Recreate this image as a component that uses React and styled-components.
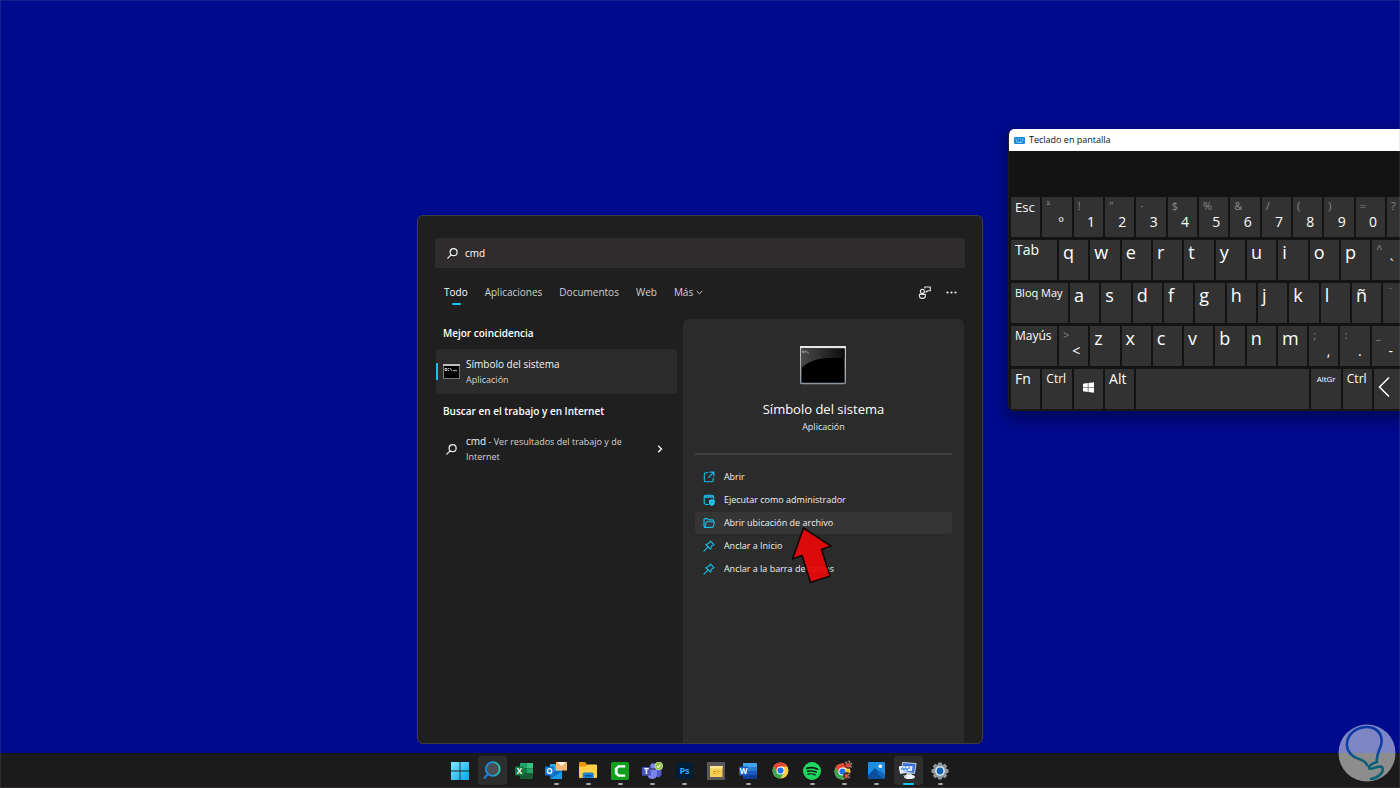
import React, { useState } from 'react';
import styled, { createGlobalStyle, css } from 'styled-components';

const GlobalStyle = createGlobalStyle`
  *, *::before, *::after { box-sizing: border-box; }
  body {
    margin: 0;
    background: #000a8c;
    font-family: "Open Sans", "Noto Sans", sans-serif;
    color: #fff;
  }
  button, input { font: inherit; color: inherit; border: 0; background: none; padding: 0; }
  h2, h3, p, ul { margin: 0; padding: 0; font-weight: 400; }
  ul { list-style: none; }
  svg { display: block; flex: none; }
`;

const Screen = styled.div`
  position: relative;
  display: flex;
  flex-direction: column;
  min-height: 100vh;
  overflow: hidden;
  &::after {
    content: '';
    position: absolute;
    inset: 0;
    border: 1px solid rgba(120, 150, 150, 0.16);
    pointer-events: none;
  }
`;

const Desktop = styled.main`
  position: relative;
  flex: 1;
  display: flex;
  flex-direction: column;
  align-items: center;
  justify-content: flex-end;
  padding: 16px 16px 9px;
`;

/* ---------- search flyout ---------- */

const Flyout = styled.section`
  position: relative;
  display: flex;
  flex-direction: column;
  width: 566px;
  max-width: 100%;
  min-height: 529px;
  padding: 22px 17px 0;
  border: 1px solid #3c3c44;
  border-radius: 6px;
  background: #1f1f1f;
`;

const SearchBox = styled.label`
  display: flex;
  align-items: center;
  gap: 7px;
  height: 30px;
  padding: 0 12px;
  border-radius: 3px;
  background: #2e2c2d;
`;

const SearchInput = styled.input`
  flex: 1;
  min-width: 0;
  outline: none;
  font-size: 10px;
  line-height: 16px;
`;

const Toolbar = styled.div`
  display: flex;
  align-items: center;
  justify-content: space-between;
  height: 51px;
  padding: 0 8px 3px 9px;
`;

const Tabs = styled.div`
  display: flex;
  gap: 17px;
`;

const Tab = styled.button`
  position: relative;
  display: flex;
  align-items: center;
  gap: 3px;
  font-size: 10px;
  line-height: 16px;
  color: ${(p) => (p.$active ? '#fff' : '#d0d0d0')};
  ${(p) =>
    p.$active &&
    css`
      &::after {
        content: '';
        position: absolute;
        left: calc(50% - 4px);
        bottom: -5px;
        width: 9px;
        height: 2px;
        border-radius: 1px;
        background: #12c4f5;
      }
    `}
`;

const Tools = styled.div`
  display: flex;
  align-items: center;
  gap: 15px;
`;

const IconButton = styled.button`
  display: flex;
`;

const Columns = styled.div`
  flex: 1;
  display: grid;
  grid-template-columns: 6fr 7fr;
  gap: 6px;
  margin: 0 1px;
`;

const Results = styled.div`
  display: flex;
  flex-direction: column;
`;

const SectionTitle = styled.h2`
  padding: ${(p) => (p.$first ? '6px 7px 8px' : '9px 7px')};
  font-size: 10px;
  line-height: 16px;
  font-weight: 600;
`;

const Result = styled.button`
  position: relative;
  display: flex;
  align-items: center;
  gap: 6px;
  min-height: ${(p) => (p.$selected ? '45px' : '42px')};
  padding: 0 14px 0 7px;
  border-radius: 3px;
  text-align: left;
  ${(p) =>
    p.$selected &&
    css`
      background: #2b2b2b;
      &::before {
        content: '';
        position: absolute;
        left: 0;
        top: 14px;
        width: 2px;
        height: 17px;
        background: #12c4f5;
      }
    `}
`;

const ResultText = styled.span`
  flex: 1;
  display: flex;
  flex-direction: column;
`;

const ResultLine = styled.span`
  flex: 1;
  font-size: 9px;
  line-height: 15px;
`;

const ResultName = styled.span`
  font-size: 10px;
  line-height: 15px;
  color: #f4f4f4;
`;

const ResultNote = styled.span`
  font-size: 9px;
  line-height: 15px;
  color: #d4d4d4;
`;

const IconSlot = styled.span`
  display: flex;
  justify-content: center;
  width: 17px;
`;

const Preview = styled.article`
  display: flex;
  flex-direction: column;
  align-items: center;
  padding: 27px 12px 0;
  border-radius: 6px 6px 0 0;
  background: #2b2b2b;
`;

const PreviewTitle = styled.h3`
  margin-top: 14px;
  font-size: 13px;
  line-height: 20px;
`;

const PreviewKind = styled.p`
  font-size: 9px;
  line-height: 16px;
  color: #e0e0e0;
`;

const Actions = styled.ul`
  align-self: stretch;
  display: flex;
  flex-direction: column;
  gap: 1px;
  margin-top: 18px;
  padding-top: 11px;
  border-top: 2px solid #404040;
`;

const Action = styled.button`
  display: flex;
  align-items: center;
  gap: 9px;
  width: 100%;
  height: 22px;
  padding: 0 8px;
  border-radius: 3px;
  background: ${(p) => (p.$hovered ? '#353535' : 'transparent')};
  font-size: 9px;
  line-height: 14px;
  color: #f0f0f0;
  text-align: left;
`;

const Pointer = styled.svg`
  position: absolute;
  left: 372px;
  top: 309px;
  pointer-events: none;
`;

/* ---------- on-screen keyboard ---------- */

const KeyboardWindow = styled.section`
  position: absolute;
  left: 72%;
  top: 129px;
  width: 568px;
  border: 1px solid #1c1c1c;
  border-top: 0;
  border-radius: 6px;
  background: #101010;
  box-shadow: 0 6px 14px 2px rgba(0, 0, 20, 0.4);
  overflow: hidden;
`;

const TitleBar = styled.header`
  display: flex;
  align-items: center;
  gap: 4px;
  height: 22px;
  padding: 0 5px;
  background: #fff;
  color: #101010;
  font-size: 9px;
  line-height: 14px;
`;

const Keys = styled.div`
  display: grid;
  gap: 3px;
  padding: 46px 2px 1px;
  background: #131313;
`;

const KeyRow = styled.div`
  display: grid;
  grid-template-columns: ${(p) => p.$columns};
  gap: 2px;
`;

const Key = styled.button`
  display: flex;
  flex-direction: column;
  align-items: ${(p) => (p.$center ? 'center' : 'flex-start')};
  justify-content: ${(p) => (p.$icon ? 'center' : 'flex-start')};
  min-width: 0;
  height: 40px;
  padding: ${(p) => (p.$icon ? '0 4px 4px' : '0 4px')};
  background: #323232;
  font-size: ${(p) => p.$size || 18}px;
  line-height: ${(p) => (p.$letter ? 24 : 20)}px;
  white-space: nowrap;
`;

const KeyAlt = styled.span`
  font-size: 11px;
  line-height: 17px;
  color: #8a8a8a;
`;

const KeyMain = styled.span`
  align-self: flex-end;
  padding-right: 4px;
  font-size: 14px;
  line-height: 16px;
`;

/* ---------- taskbar ---------- */

const Taskbar = styled.footer`
  display: flex;
  justify-content: center;
  gap: 3px;
  height: 35px;
  padding-top: 3px;
  background: #1b1b1b;
`;

const TaskButton = styled.button`
  position: relative;
  display: flex;
  align-items: center;
  justify-content: center;
  width: 29px;
  height: 29px;
  border-radius: 3px;
  background: ${(p) => (p.$lit ? '#2d2d2d' : 'transparent')};
  ${(p) =>
    p.$mark &&
    css`
      &::after {
        content: '';
        position: absolute;
        bottom: 0;
        left: calc(50% - ${p.$mark === 'active' ? 5 : 2}px);
        width: ${p.$mark === 'active' ? 11 : 5}px;
        height: 2px;
        border-radius: 1px;
        background: ${p.$mark === 'active' ? '#12c4f5' : '#a6a6a6'};
      }
    `}
`;

const Watermark = styled.svg`
  position: absolute;
  right: 4px;
  bottom: 6px;
  pointer-events: none;
`;

/* ---------- icons ---------- */

const Magnifier = ({ size = 11 }) => (
  <svg width={size} height={size} viewBox="0 0 11 11" fill="none" stroke="#f0f0f0" strokeWidth="1.2" strokeLinecap="round">
    <circle cx="6.6" cy="4.2" r="3.5" />
    <path d="M4.1 6.8 0.8 10.2" />
  </svg>
);

const ChevronDown = () => (
  <svg width="7" height="5" viewBox="0 0 7 5" fill="none" stroke="#cfcfcf" strokeWidth="1">
    <path d="M0.7 1 3.5 3.8 6.3 1" />
  </svg>
);

const ChevronRight = () => (
  <svg width="6" height="8" viewBox="0 0 6 8" fill="none" stroke="#f4f4f4" strokeWidth="1.4">
    <path d="M1.2 0.8 4.5 4 1.2 7.2" />
  </svg>
);

const FeedbackIcon = () => (
  <svg width="13" height="13" viewBox="0 0 13 13" fill="none" stroke="#e4e4e4" strokeWidth="1.1">
    <circle cx="4.4" cy="5.4" r="2" />
    <path d="M1.4 8.4h6v1.300a3 2.700 0 0 1-6 0z" strokeLinejoin="round" />
    <path d="M6.800 2.600V1h5.500v3.800H9.700L8.200 6.200V4.800" strokeLinejoin="round" />
  </svg>
);

const MoreIcon = () => (
  <svg width="11" height="3" viewBox="0 0 11 3" fill="#f0f0f0">
    <circle cx="1.5" cy="1.5" r="1.1" />
    <circle cx="5.5" cy="1.5" r="1.1" />
    <circle cx="9.5" cy="1.5" r="1.1" />
  </svg>
);

const ConsoleSmall = () => (
  <svg width="17" height="15" viewBox="0 0 17 15">
    <rect x=".5" y=".5" width="16" height="14" fill="#000" stroke="#777" />
    <path d="M0 1h17" stroke="#bdbdbd" strokeWidth="2" />
    <path d="M2 4.5h2v2H2zM5.5 4v1M5.5 6v1M7 4l2 3M10 6.7h4" fill="none" stroke="#ddd" strokeWidth=".9" />
  </svg>
);

const ConsoleLarge = () => (
  <svg width="46" height="39" viewBox="0 0 46 39">
    <defs>
      <linearGradient id="gloss" x1="0" x2="1">
        <stop offset="0" stopColor="#4a4a4a" />
        <stop offset="1" stopColor="#0c0c0c" />
      </linearGradient>
      <linearGradient id="frame" x1="0" y1="0" x2="0" y2="1">
        <stop offset="0" stopColor="#c8c8c8" />
        <stop offset="1" stopColor="#8d97a0" />
      </linearGradient>
    </defs>
    <rect x=".7" y="1" width="44.600" height="36.500" rx="1" fill="#000" stroke="url(#frame)" strokeWidth="1.400" />
    <path d="M1.400 3H44.600V12.500C24 10 9 14 1.400 22Z" fill="url(#gloss)" />
    <path d="M0 1.200h46" stroke="#e6e6e6" strokeWidth="2.200" />
    <path d="M2.500 5h1.600v1.500H2.500zM5.500 5v1.500M6.500 5l1 2M7.500 7h1.500" fill="none" stroke="#bbb" strokeWidth=".6" />
  </svg>
);

const accent = { fill: 'none', stroke: '#18bce8', strokeWidth: 1.1, strokeLinejoin: 'round', strokeLinecap: 'round' };

const OpenIcon = () => (
  <svg width="12" height="12" viewBox="0 0 12 12" {...accent}>
    <path d="M5 1.8H2.6A1.3 1.3 0 0 0 1.3 3.1v6.3a1.3 1.3 0 0 0 1.3 1.3h6.3a1.3 1.3 0 0 0 1.3-1.3V7" />
    <path d="M7 1.1h3.9V5M10.8 1.2 5.6 6.4" />
  </svg>
);

const AdminIcon = () => (
  <svg width="12" height="12" viewBox="0 0 12 12" {...accent}>
    <path d="M5.5 10.5H3A1.8 1.8 0 0 1 1.2 8.7V3A1.8 1.8 0 0 1 3 1.2h5.8A1.8 1.8 0 0 1 10.6 3v2.200M1.200 3.200h9.400" />
    <path d="M1.6 2.200h8.600" strokeWidth="1.200" />
    <path d="M8.8 5.300 11.700 6.300v2.400c0 1.500-1.200 2.500-2.900 3.200-1.700-.7-2.800-1.700-2.800-3.200V6.300z" fill="#18d4ff" stroke="none" />
    <path d="M8.8 7v3M7.700 8.400h2.200" stroke="#1688a8" strokeWidth=".6" />
  </svg>
);

const FolderIcon = () => (
  <svg width="12" height="12" viewBox="0 0 12 12" {...accent}>
    <path d="M1.8 10.4 1 9.6V2.3l.8-.7h2.6l1.3 1.3h4l.8.8v1.1" />
    <path d="M1.8 10.4 3 5.6l.8-.8h7.1l.4.6-.9 4.3-.8.7z" />
  </svg>
);

const PinIcon = () => (
  <svg width="12" height="12" viewBox="0 0 12 12" {...accent}>
    <path d="M7.3 1 11 4.7 8.6 6.1 7.5 9.2 2.8 4.5 5.9 3.4z" />
    <path d="M4.9 7.1.9 11.1" />
  </svg>
);

const KeyboardIcon = () => (
  <svg width="11" height="7" viewBox="0 0 11 7">
    <rect width="11" height="7" rx="1" fill="#1789d8" />
    <path d="M1.5 2h1M4 2h1M6.3 2h1M8.600 2h1M2 3.600h1M8 3.600h1M2.600 5.200h5.600" stroke="#bfe4ff" strokeWidth=".9" />
  </svg>
);

const WindowsGlyph = () => (
  <svg width="11" height="11" viewBox="0 0 11 11" fill="#fff">
    <path d="M0 1.800 4.800 1.100V5.200H0zM5.400 1 11 .2v5H5.400zM0 5.800h4.800v4.100L0 9.200zM5.400 5.800H11v5L5.400 10z" />
  </svg>
);

const ArrowLeftGlyph = () => (
  <svg width="12" height="22" viewBox="0 0 12 22" fill="none" stroke="#fff" strokeWidth="1.500">
    <path d="M11 1.500 1.500 11 11 20.500" />
  </svg>
);

const glyph = { fill: '#fff', fontFamily: '"Open Sans", sans-serif', fontWeight: 700, textAnchor: 'middle' };

const StartIcon = () => (
  <svg width="18" height="18" viewBox="0 0 18 18">
    <defs>
      <linearGradient id="win" x1="0" y1="0" x2="1" y2="1">
        <stop offset="0" stopColor="#7ae8ff" />
        <stop offset="1" stopColor="#0aa2ec" />
      </linearGradient>
    </defs>
    <path d="M0 0h8.6v8.6H0zM9.4 0H18v8.6H9.4zM0 9.4h8.6V18H0zM9.4 9.4H18V18H9.4z" fill="url(#win)" />
  </svg>
);

const SearchIcon = () => (
  <svg width="18" height="19" viewBox="0 0 18 19" fill="none">
    <defs>
      <linearGradient id="lens" x1="0" x2="1">
        <stop offset="0.3" stopColor="#1a88dc" />
        <stop offset="1" stopColor="#22c8a4" />
      </linearGradient>
    </defs>
    <path d="M5.4 12.4 1.6 16.8" stroke="#1a7cd0" strokeWidth="2.2" strokeLinecap="round" />
    <circle cx="9.8" cy="8" r="6.9" fill="#4a4e52" stroke="url(#lens)" strokeWidth="1.9" />
  </svg>
);

const ExcelIcon = () => (
  <svg width="18" height="18" viewBox="0 0 18 18">
    <path d="M5 1h6.5v5.3H5z" fill="#21a366" />
    <path d="M11.500 1H18v5.300h-6.500z" fill="#33c481" />
    <path d="M5 6.300h6.500v5.300H5z" fill="#107c41" />
    <path d="M11.500 6.300H18v5.300h-6.500z" fill="#21a366" />
    <path d="M5 11.600h13V17H5z" fill="#185c37" />
    <rect y="4.600" width="9" height="9" rx="1" fill="#107c41" />
    <text x="4.500" y="12" fontSize="8" {...glyph}>X</text>
  </svg>
);

const OutlookIcon = () => (
  <svg width="22" height="18" viewBox="0 0 22 18">
    <rect x="5" y="2" width="12" height="14" fill="#28a8ea" />
    <path d="M5 9h12v7.500H5z" fill="#0a6cc4" />
    <path d="M5 17 17 9.500V17z" fill="#1c9be6" />
    <rect y="4.600" width="9" height="9" rx="1" fill="#0f78d4" />
    <text x="4.500" y="12" fontSize="8" {...glyph}>O</text>
    <rect x="11" y="0" width="11" height="8.500" fill="#f7b877" />
    <path d="M11 0 16.500 5 22 0z" fill="#fff0df" />
    <path d="M11 0 16.500 5 22 0" fill="none" stroke="#e08a3c" strokeWidth=".8" />
  </svg>
);

const ExplorerIcon = () => (
  <svg width="18" height="17" viewBox="0 0 18 17">
    <path d="M0 1a1 1 0 0 1 1-1h5l2 2.500V6H0z" fill="#e8970c" />
    <path d="M0 4.500h6.500l2-2H17a1 1 0 0 1 1 1V15a1 1 0 0 1-1 1H1a1 1 0 0 1-1-1z" fill="#ffcf4a" />
    <path d="M3.700 16v-4a1.500 1.500 0 0 1 1.500-1.500h8A1.500 1.500 0 0 1 14.700 12v4z" fill="#1f7fd4" />
    <path d="M5.800 13h7v1.500h-7z" fill="#0d57a0" />
  </svg>
);

const CamtasiaIcon = () => (
  <svg width="18" height="18" viewBox="0 0 18 18">
    <rect width="18" height="18" rx="1.500" fill="#12a01c" />
    <path d="M14.200 5.400V3.200H7.200L3.800 6.200v5.600l3.400 3h7v-2.400H8.300L6.500 10.800V7.100L8.300 5.400z" fill="#fff" />
  </svg>
);

const TeamsIcon = () => (
  <svg width="21" height="18" viewBox="0 0 21 18">
    <circle cx="11" cy="4" r="2.800" fill="#7b83eb" />
    <path d="M13 7.500h6.500v4.500a3.500 3.500 0 0 1-5 3z" fill="#5059c9" />
    <path d="M5.500 7.500H15V13a4.800 4.800 0 0 1-9.500 0z" fill="#7b83eb" />
    <rect y="5" width="8.800" height="8.800" rx="1" fill="#4b53bc" />
    <text x="4.400" y="12.200" fontSize="8" {...glyph}>T</text>
    <circle cx="16.800" cy="4" r="3.900" fill="#8ac43f" stroke="#e8f5dc" strokeWidth=".6" />
    <path d="M14.900 4.100 16.300 5.500 18.800 2.700" fill="none" stroke="#fff" strokeWidth="1.100" />
  </svg>
);

const PhotoshopIcon = () => (
  <svg width="17" height="17" viewBox="0 0 17 17">
    <rect width="17" height="17" rx="3" fill="#001e36" />
    <text x="8.500" y="12" fontSize="9" {...glyph} fill="#31a8ff">Ps</text>
  </svg>
);

const NotesIcon = () => (
  <svg width="18" height="18" viewBox="0 0 18 18">
    <rect width="18" height="18" fill="#595959" />
    <rect x="3" y="4" width="12.500" height="11" fill="#f6cf55" />
    <path d="M3 4h12.500v2.500H3z" fill="#ffe694" />
    <path d="M6 9.500h3.500M10.500 8.500 12 9.500 10 11.500M6.500 11.500h2" stroke="#cc8a20" strokeWidth=".9" fill="none" />
  </svg>
);

const WordIcon = () => (
  <svg width="18" height="18" viewBox="0 0 18 18">
    <path d="M4 1h14v4H4z" fill="#41a5ee" />
    <path d="M4 5h14v4H4z" fill="#2b7cd3" />
    <path d="M4 9h14v4H4z" fill="#185abd" />
    <path d="M4 13h14v4H4z" fill="#103f91" />
    <rect y="4.600" width="9" height="9" rx="1" fill="#185abd" />
    <text x="4.500" y="12" fontSize="8" {...glyph}>W</text>
  </svg>
);

const ChromeShape = () => (
  <g>
    <circle cx="8.500" cy="8.500" r="8" fill="#ffcd40" />
    <path d="M1.600 4.500A8 8 0 0 1 15.400 4.500H8.500L5 10.500z" fill="#e94335" />
    <path d="M1.600 4.500A8 8 0 0 0 8.500 16.500L12 10.500H5z" fill="#34a853" />
    <circle cx="8.500" cy="8.500" r="4" fill="#fff" />
    <circle cx="8.500" cy="8.500" r="3.100" fill="#1a73e8" />
  </g>
);

const ChromeIcon = () => (
  <svg width="17" height="17" viewBox="0 0 17 17">
    <ChromeShape />
  </svg>
);

const ChromeProfileIcon = () => (
  <svg width="21" height="21" viewBox="0 0 21 21">
    <g transform="translate(0 3)">
      <ChromeShape />
    </g>
    <circle cx="14.500" cy="4.500" r="4.200" fill="#3b2f2e" />
    <circle cx="13.800" cy="5.300" r="2.300" fill="#e8452c" />
    <path d="M11 2l1.500 1M15 .8l.5 2M18 3.500l-2 1M17.500 7l-2-.8" stroke="#cfc8c0" strokeWidth=".9" />
    <path d="M10.500 9.500 17 11 12.500 13z" fill="#f0c02c" />
    <circle cx="13" cy="16" r="3.800" fill="#3d2b28" />
    <circle cx="12.500" cy="16" r="1.900" fill="#d8563c" />
    <path d="M10.500 18.500l1-1M15.500 14l-1.500.8M15.800 17.500l-1.600-.7" stroke="#cfc8c0" strokeWidth=".8" />
  </svg>
);

const SpotifyIcon = () => (
  <svg width="18" height="18" viewBox="0 0 18 18">
    <circle cx="9" cy="9" r="9" fill="#1ed760" />
    <g fill="none" stroke="#121212" strokeLinecap="round">
      <path d="M3.800 6.300C7.500 5.200 11.700 5.600 14.600 7.200" strokeWidth="1.700" />
      <path d="M4.400 9.300C7.500 8.500 10.800 8.900 13.300 10.200" strokeWidth="1.400" />
      <path d="M4.900 12.100C7.400 11.500 10 11.700 12.200 12.900" strokeWidth="1.200" />
    </g>
  </svg>
);

const PhotosIcon = () => (
  <svg width="17" height="17" viewBox="0 0 17 17">
    <rect width="17" height="17" rx="1" fill="#1c8de0" />
    <path d="M0 13.500 7 6l10 10v1H0z" fill="#0b4f9e" />
    <path d="M9 11.500 12 8.500l5 4.500v4z" fill="#1467bb" />
    <circle cx="12.300" cy="4.300" r="1.800" fill="#fff" />
  </svg>
);

const ScreenKeyboardIcon = () => (
  <svg width="18" height="18" viewBox="0 0 18 18">
    <path d="M0 4.500 13 2v8L1 12z" fill="#dce6f4" />
    <path d="M3.500.500 17 1.500 15.500 11.500 3 9.500z" fill="#3b6fd6" stroke="#d7e2f0" strokeWidth=".9" />
    <path d="M0 4.500 13.500 4.200 13 8.800 1 9.800z" fill="#f2f6fb" />
    <path d="M2 8 3.500 6 5 8 6.500 6 8 8 9.500 6 11.500 6" fill="none" stroke="#2f7be0" strokeWidth="1.200" />
    <path d="M7.500 11h5l.6 2.500h-6z" fill="#b8c4d0" />
    <ellipse cx="10.500" cy="14.800" rx="5.500" ry="2.300" fill="#eef2f6" />
    <path d="M4.500 13.500 8 14.800" stroke="#c2cbd6" strokeWidth="1" />
  </svg>
);

const SettingsIcon = () => (
  <svg width="18" height="18" viewBox="0 0 18 18">
    <g fill="#8e969e">
      {[0, 45, 90, 135].map((angle) => (
        <rect key={angle} x="7" y="0.400" width="4" height="17.200" rx="1" transform={`rotate(${angle} 9 9)`} />
      ))}
      <circle cx="9" cy="9" r="6.900" />
    </g>
    <circle cx="9" cy="9" r="4.800" fill="#e4eef6" />
    <circle cx="9" cy="9" r="3.400" fill="#1464b4" />
  </svg>
);

/* ---------- data ---------- */

const tabs = ['Todo', 'Aplicaciones', 'Documentos', 'Web', 'Más'];

const actions = [
  { label: 'Abrir', Icon: OpenIcon },
  { label: 'Ejecutar como administrador', Icon: AdminIcon },
  { label: 'Abrir ubicación de archivo', Icon: FolderIcon, hovered: true },
  { label: 'Anclar a Inicio', Icon: PinIcon },
  { label: 'Anclar a la barra de tareas', Icon: PinIcon },
];

const letters = (text) => text.split('').map((letter) => ({ letter }));
const blanks = (count) => Array.from({ length: count }, () => ({}));

const keyRows = [
  {
    columns: 'repeat(18, 1fr)',
    keys: [
      { name: 'Esc', size: 13 },
      { alt: 'ª', main: 'º' },
      { alt: '!', main: '1' },
      { alt: '"', main: '2' },
      { alt: '·', main: '3' },
      { alt: '$', main: '4' },
      { alt: '%', main: '5' },
      { alt: '&', main: '6' },
      { alt: '/', main: '7' },
      { alt: '(', main: '8' },
      { alt: ')', main: '9' },
      { alt: '=', main: '0' },
      { alt: '?' },
      ...blanks(5),
    ],
  },
  {
    columns: '46px repeat(12, 1fr) 138px',
    keys: [{ name: 'Tab', size: 14 }, ...letters('qwertyuiop'), { alt: '^', main: '`' }, ...blanks(2)],
  },
  {
    columns: '57px repeat(12, 1fr) 127px',
    keys: [{ name: 'Bloq May', size: 11 }, ...letters('asdfghjklñ'), { alt: '¨', main: '´' }, ...blanks(2)],
  },
  {
    columns: '46px repeat(11, 1fr) 170px',
    keys: [
      { name: 'Mayús', size: 12 },
      { alt: '>', main: '<' },
      ...letters('zxcvbnm'),
      { alt: ';', main: ',' },
      { alt: ':', main: '.' },
      { alt: '_', main: '-' },
      ...blanks(1),
    ],
  },
  {
    columns: 'repeat(4, 1fr) 173px repeat(7, 1fr) 42px',
    keys: [
      { name: 'Fn', size: 14 },
      { name: 'Ctrl', size: 12 },
      { Icon: WindowsGlyph, label: 'Windows', center: true },
      { name: 'Alt', size: 14 },
      { label: 'Espacio' },
      { name: 'AltGr', size: 8, center: true },
      { name: 'Ctrl', size: 12 },
      { Icon: ArrowLeftGlyph, label: 'Izquierda' },
      ...blanks(5),
    ],
  },
];

const apps = [
  { label: 'Inicio', Icon: StartIcon },
  { label: 'Buscar', Icon: SearchIcon, lit: true },
  { label: 'Excel', Icon: ExcelIcon },
  { label: 'Outlook', Icon: OutlookIcon, mark: 'open' },
  { label: 'Explorador', Icon: ExplorerIcon, mark: 'open' },
  { label: 'Camtasia', Icon: CamtasiaIcon, mark: 'open' },
  { label: 'Teams', Icon: TeamsIcon, mark: 'open' },
  { label: 'Photoshop', Icon: PhotoshopIcon, mark: 'open' },
  { label: 'Notas', Icon: NotesIcon },
  { label: 'Word', Icon: WordIcon, mark: 'open' },
  { label: 'Chrome', Icon: ChromeIcon },
  { label: 'Spotify', Icon: SpotifyIcon, mark: 'open' },
  { label: 'Chrome, perfil', Icon: ChromeProfileIcon, mark: 'open' },
  { label: 'Fotos', Icon: PhotosIcon, mark: 'open' },
  { label: 'Teclado en pantalla', Icon: ScreenKeyboardIcon, lit: true, mark: 'active' },
  { label: 'Configuración', Icon: SettingsIcon, mark: 'open' },
];

function KeyCap({ name, size, letter, alt, main, Icon, label, center }) {
  return (
    <Key $size={size} $letter={Boolean(letter)} $icon={Boolean(Icon)} $center={center} aria-label={label}>
      {name || letter}
      {alt && <KeyAlt>{alt}</KeyAlt>}
      {main && <KeyMain>{main}</KeyMain>}
      {Icon && <Icon />}
    </Key>
  );
}

function Keyboard() {
  return (
    <KeyboardWindow aria-label="Teclado en pantalla">
      <TitleBar>
        <KeyboardIcon />
        Teclado en pantalla
      </TitleBar>
      <Keys>
        {keyRows.map((row, r) => (
          <KeyRow key={r} $columns={row.columns}>
            {row.keys.map((key, k) => (
              <KeyCap key={k} {...key} />
            ))}
          </KeyRow>
        ))}
      </Keys>
    </KeyboardWindow>
  );
}

function SearchFlyout() {
  const [query, setQuery] = useState('cmd');
  const [tab, setTab] = useState('Todo');
  return (
    <Flyout>
      <SearchBox>
        <Magnifier />
        <SearchInput aria-label="Buscar" value={query} onChange={(e) => setQuery(e.target.value)} />
      </SearchBox>
      <Toolbar>
        <Tabs>
          {tabs.map((name) => (
            <Tab key={name} $active={name === tab} onClick={() => setTab(name)}>
              {name}
              {name === 'Más' && <ChevronDown />}
            </Tab>
          ))}
        </Tabs>
        <Tools>
          <IconButton aria-label="Comentarios"><FeedbackIcon /></IconButton>
          <IconButton aria-label="Opciones"><MoreIcon /></IconButton>
        </Tools>
      </Toolbar>
      <Columns>
        <Results>
          <SectionTitle $first>Mejor coincidencia</SectionTitle>
          <Result $selected>
            <ConsoleSmall />
            <ResultText>
              <ResultName>Símbolo del sistema</ResultName>
              <ResultNote>Aplicación</ResultNote>
            </ResultText>
          </Result>
          <SectionTitle>Buscar en el trabajo y en Internet</SectionTitle>
          <Result>
            <IconSlot><Magnifier /></IconSlot>
            <ResultLine>
              <ResultName>cmd</ResultName>
              <ResultNote> - Ver resultados del trabajo y de Internet</ResultNote>
            </ResultLine>
            <ChevronRight />
          </Result>
        </Results>
        <Preview>
          <ConsoleLarge />
          <PreviewTitle>Símbolo del sistema</PreviewTitle>
          <PreviewKind>Aplicación</PreviewKind>
          <Actions>
            {actions.map(({ label, Icon, hovered }) => (
              <li key={label}>
                <Action $hovered={hovered}>
                  <Icon />
                  {label}
                </Action>
              </li>
            ))}
          </Actions>
        </Preview>
      </Columns>
      <Pointer width="44" height="60" viewBox="0 0 44 60" aria-hidden="true">
        <path
          d="M13.500 3 41 21 31.500 24.500 40 51 20.500 57.500 12 30.500 2.500 34Z"
          fill="#e80808"
          fillOpacity="0.94"
          stroke="#100404"
          strokeWidth="1.600"
          strokeLinejoin="round"
        />
      </Pointer>
    </Flyout>
  );
}

export default function App() {
  return (
    <Screen>
      <GlobalStyle />
      <Desktop>
        <SearchFlyout />
        <Keyboard />
      </Desktop>
      <Taskbar>
        {apps.map(({ label, Icon, lit, mark }) => (
          <TaskButton key={label} aria-label={label} $lit={lit} $mark={mark}>
            <Icon />
          </TaskButton>
        ))}
      </Taskbar>
      <Watermark width="58" height="58" viewBox="0 0 58 58" aria-hidden="true">
        <defs>
          <linearGradient id="bulb" x1="0" y1="0" x2="0" y2="1">
            <stop offset="0" stopColor="#0a34a8" />
            <stop offset="0.5" stopColor="#0c48a4" />
            <stop offset="0.6" stopColor="#0c5c74" />
            <stop offset="1" stopColor="#0c6478" />
          </linearGradient>
        </defs>
        <circle cx="29" cy="29" r="28.500" fill="#fff" fillOpacity="0.5" />
        <path
          d="M29 41C27 35 20 36 15 32 8 27 7 18 12 11 18 3 30 1 37 5 44 9 45 17 42 24 40 29 38 33 39 38 35 39 30 42 31 44 33 47 39 41 44 43 47 48 40 54 33 55"
          fill="none"
          stroke="url(#bulb)"
          strokeWidth="2.600"
          strokeLinecap="round"
          strokeLinejoin="round"
        />
      </Watermark>
    </Screen>
  );
}
